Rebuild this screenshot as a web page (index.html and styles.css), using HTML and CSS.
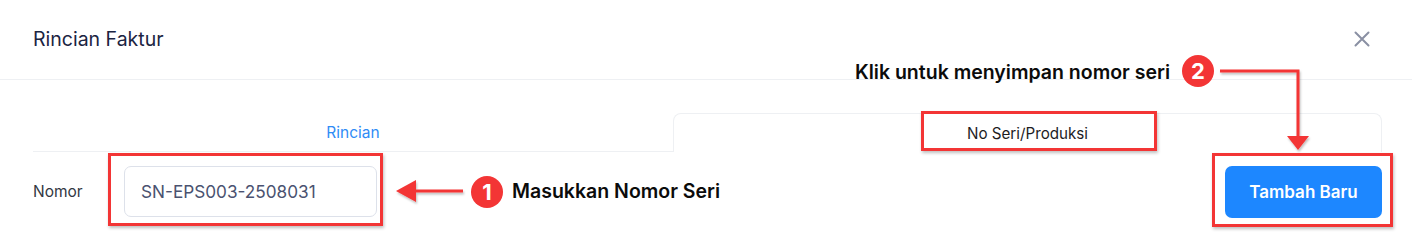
FILE: index.html
```html
<!DOCTYPE html>
<html>
<head>
<meta charset="utf-8">
<link rel="stylesheet" href="styles.css">
</head>
<body>
<div class="modal">
  <div class="header">
    <div class="title">Rincian Faktur</div>
    <svg class="close" width="16" height="16" viewBox="0 0 16 16"><path d="M1.5 1.5 L14.5 14.5 M14.5 1.5 L1.5 14.5" stroke="#8a90a3" stroke-width="2" stroke-linecap="round"/></svg>
  </div>
  <div class="content">
    <div class="tabs">
      <div class="tab">Rincian</div>
      <div class="tab active">No Seri/Produksi</div>
    </div>
    <div class="form-row">
      <label class="label">Nomor</label>
      <div class="input">SN-EPS003-2508031</div>
      <div class="spacer"></div>
      <button class="btn">Tambah Baru</button>
    </div>
  </div>
</div>

<div class="anno box box-input"></div>
<div class="anno box box-tab"></div>
<div class="anno box box-btn"></div>
<svg class="anno arrows" width="1412" height="236" viewBox="0 0 1412 236">
  <g filter="url(#sh)">
    <path d="M463 191 H410" stroke="#f33535" stroke-width="3" fill="none"/>
    <path d="M396 191 L416 180 L416 202 Z" fill="#f33535"/>
    <path d="M1220 71 H1298 V138" stroke="#f33535" stroke-width="3" fill="none"/>
    <path d="M1298 150 L1287 136 L1309 136 Z" fill="#f33535"/>
  </g>
  <defs>
    <filter id="sh" x="-20%" y="-20%" width="140%" height="140%">
      <feDropShadow dx="1" dy="2" stdDeviation="1.2" flood-color="#000" flood-opacity="0.25"/>
    </filter>
  </defs>
</svg>
<div class="anno badge badge-1">1</div>
<div class="anno note note-1">Masukkan Nomor Seri</div>
<div class="anno badge badge-2">2</div>
<div class="anno note note-2">Klik untuk menyimpan nomor seri</div>
</body>
</html>
```

FILE: styles.css
```css
* { box-sizing: border-box; }
html, body { margin: 0; padding: 0; background: #fff; }
body {
  font-family: Inter, "Noto Sans", "Liberation Sans", sans-serif;
  width: 1412px;
  height: 236px;
  overflow: hidden;
  position: relative;
}
.modal { width: 1412px; }
.header {
  height: 80px;
  border-bottom: 1px solid #eef0f3;
  display: flex;
  align-items: center;
  justify-content: space-between;
  padding: 0 42px 2px 33px;
}
.title {
  font-size: 19.5px;
  color: #1b2442;
  font-weight: 400;
}
.close { display: block; margin-top: 0; }
.content { padding: 0 30px 0 33px; }
.tabs {
  display: flex;
  margin-top: 33px;
  height: 39px;
}
.tab {
  display: flex;
  align-items: center;
  justify-content: center;
  font-size: 15.5px;
  color: #2f8cf6;
}
.tab:first-child {
  width: 640px;
  border-bottom: 1px solid #eef0f3;
  padding-top: 1px;
}
.tab.active {
  flex: 1;
  font-size: 15.2px;
  color: #1d1d1f;
  border: 1px solid #eef0f3;
  border-bottom: none;
  border-radius: 8px 8px 0 0;
  padding-top: 1px;
}
.form-row {
  display: flex;
  align-items: center;
  margin-top: 13px;
}
.label {
  width: 91px;
  font-size: 15.5px;
  color: #333842;
}
.input {
  width: 253px;
  height: 51px;
  border: 1px solid #dde1ea;
  border-radius: 7px;
  padding: 0 16px;
  display: flex;
  align-items: center;
  font-size: 17.2px;
  color: #4a5270;
}
.spacer { flex: 1; }
.btn {
  width: 157px;
  height: 52px;
  border: none;
  border-radius: 7px;
  background: #1d87ff;
  color: #fff;
  font-family: inherit;
  font-size: 17px;
  font-weight: 600;
  margin-top: 1px;
}
.anno { position: absolute; }
.box {
  border: 3px solid #f33535;
  box-shadow: 1px 2px 3px rgba(0,0,0,0.25);
}
.box-input { left: 108px; top: 153px; width: 275px; height: 73px; }
.box-tab { left: 921px; top: 111px; width: 236px; height: 40px; }
.box-btn { left: 1212px; top: 153px; width: 181px; height: 74px; }
.arrows { left: 0; top: 0; }
.badge {
  width: 32px;
  height: 32px;
  border-radius: 50%;
  background: #f33535;
  color: #fff;
  font-weight: 700;
  font-size: 22px;
  display: flex;
  align-items: center;
  justify-content: center;
}
.badge-1 { left: 471px; top: 176px; }
.badge-2 { left: 1182px; top: 55px; }
.note {
  font-size: 19.5px;
  font-weight: 600;
  color: #0b0b0b;
  white-space: nowrap;
  line-height: 22px;
}
.note-1 { left: 512px; top: 180px; }
.note-2 { left: 855px; top: 61px; }
```
